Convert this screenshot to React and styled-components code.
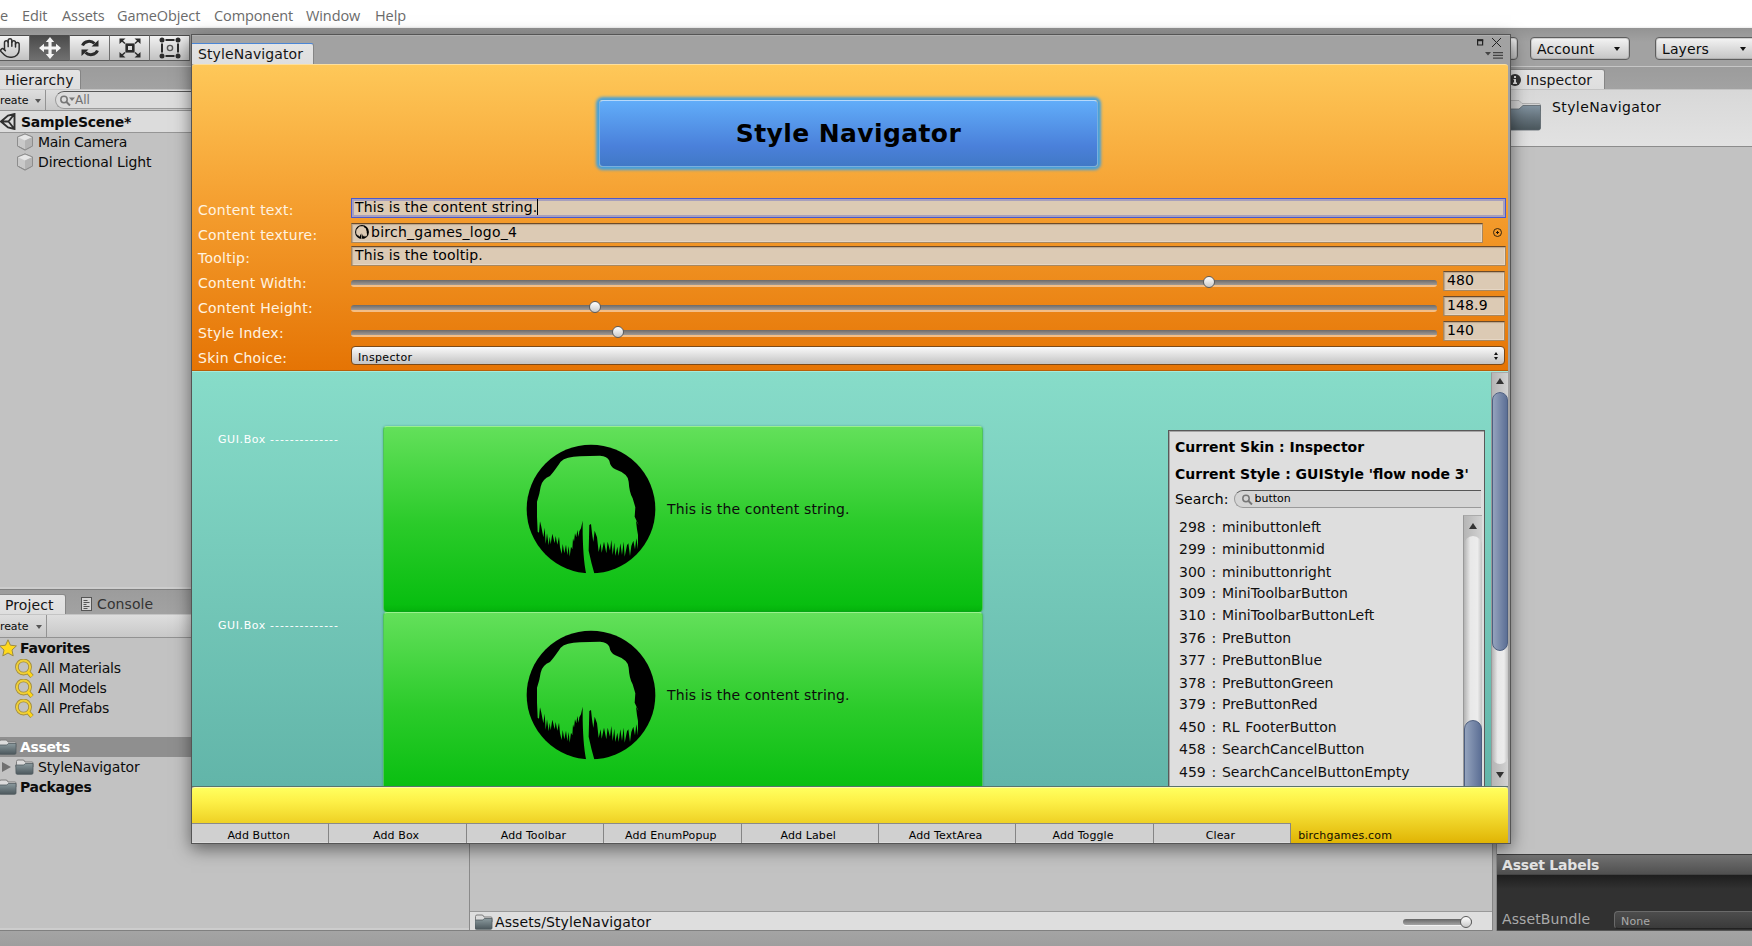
import React from "react";
import styled, { createGlobalStyle, css } from "styled-components";
import { Hand } from "lucide-react";

const Global = createGlobalStyle`
  * { box-sizing: border-box; }
  body { margin: 0; overflow: hidden; background: #a2a2a2; font-family: "DejaVu Sans", Verdana, sans-serif; }
`;

const Screen = styled.div`
  position: relative;
  width: 1752px;
  height: 946px;
  overflow: hidden;
  display: flex;
  flex-direction: column;
  background: #a2a2a2;
  color: #0c0c0c;
  font-size: 14px;
  line-height: 20px;
  letter-spacing: 0.1px;
  white-space: nowrap;
`;

/* ---------- menu and main toolbar ---------- */

const MenuBar = styled.nav`
  display: flex;
  height: 28px;
  flex: none;
  background: linear-gradient(#fff 26px, #ececec);
  font: 14.5px/31px "Open Sans", "Noto Sans", sans-serif;
  letter-spacing: -0.1px;
  color: #6b6b6b;
`;

const MenuItem = styled.span`
  flex: none;
  width: ${(p) => p.$w}px;
`;

const MainToolbar = styled.div`
  display: flex;
  flex: none;
  height: 39px;
  padding-top: 7px;
  justify-content: space-between;
  border-bottom: 1px solid #c6c6c6;
  background: linear-gradient(#939393, #a2a2a2 14px);
`;

const ToolGroup = styled.div`
  display: flex;
  height: 26px;
  margin-left: -10px;
`;

const Tool = styled.div`
  width: 40px;
  height: 26px;
  display: flex;
  align-items: center;
  justify-content: center;
  border-top: 1px solid #4c4c4c;
  border-bottom: 1px solid #5c5c5c;
  border-right: 1px solid #6e6e6e;
  color: #2e2e2e;
  background: ${(p) => (p.$on ? "linear-gradient(#4b4b4b, #707070)" : "linear-gradient(#f2f2f2, #c2c2c2)")};
`;

const TopRight = styled.div`
  display: flex;
  padding-top: 2px;
`;

const DropButton = styled.div`
  display: flex;
  align-items: center;
  justify-content: space-between;
  width: ${(p) => p.$w}px;
  height: 23px;
  margin-left: ${(p) => p.$ml || 0}px;
  margin-right: ${(p) => p.$mr || 0}px;
  padding: 0 9px 0 6px;
  border: 1px solid #5e5e5e;
  border-radius: 4px;
  background: linear-gradient(#f4f4f4, #c4c4c4);
  box-shadow: inset 0 0 0 1px rgba(140, 140, 140, 0.35);
`;

const Triangle = styled.i`
  width: 0;
  height: 0;
  border: ${(p) => p.$s || 3}px solid transparent;
  ${(p) => p.$up
    ? css`border-top: 0; border-bottom: ${p.$h || 4}px solid ${p.$c || "#111"};`
    : css`border-bottom: 0; border-top: ${p.$h || 4}px solid ${p.$c || "#111"};`}
`;

/* ---------- docked panels ---------- */

const Workspace = styled.div`
  display: flex;
  flex: none;
  height: 864px;
`;

const LeftDock = styled.div`
  width: 1493px;
  flex: none;
  display: flex;
  flex-direction: column;
  border-right: 1px solid #868686;
`;

const RightDock = styled.div`
  flex: 1;
  margin-left: 3px;
  display: flex;
  flex-direction: column;
  border-left: 1px solid #868686;
`;

const Panel = styled.section`
  display: flex;
  flex-direction: column;
  height: ${(p) => p.$h}px;
  background: #c2c2c2;
  border-bottom: 1px solid #808080;
  box-shadow: inset 0 -2px #cdcdcd;
`;

const TabBar = styled.div`
  display: flex;
  align-items: flex-end;
  flex: none;
  height: ${(p) => p.$h}px;
  background: linear-gradient(#9c9c9c, #a2a2a2);
  border-bottom: 1px solid #c4c4c4;
`;

const Tab = styled.div`
  display: flex;
  align-items: center;
  height: ${(p) => p.$h || 20}px;
  width: ${(p) => p.$w}px;
  padding-left: ${(p) => p.$pl}px;
  gap: 5px;
  color: ${(p) => (p.$off ? "#333" : "#151515")};
  ${(p) => !p.$off && css`
    background: linear-gradient(#e4e4e4, #dedede);
    border-top: ${p.$blue ? "1.5px solid #4a86d6" : "1px solid #8a8a8a"};
    border-right: 1px solid #858585;
    border-radius: 0 3px 0 0;
  `}
`;

const PanelToolbar = styled.div`
  display: flex;
  align-items: center;
  flex: none;
  height: ${(p) => p.$h}px;
  background: linear-gradient(#dedede, #c8c8c8);
  border-bottom: 1px solid #929292;
`;

const CreateMenu = styled.div`
  display: flex;
  align-items: center;
  justify-content: space-between;
  width: ${(p) => p.$w}px;
  height: 100%;
  padding: 2px 4px 0 0;
  border-right: 1px solid #939393;
  font-size: 11px;
  letter-spacing: -0.1px;
`;

const SearchBox = styled.div`
  display: flex;
  align-items: center;
  flex: 1;
  height: 18px;
  margin-left: ${(p) => p.$ml}px;
  padding-left: ${(p) => p.$pl || 4}px;
  gap: ${(p) => p.$gap || 0}px;
  border: 1px solid #9a9a9a;
  border-top-color: #565656;
  border-right: 0;
  border-radius: 9px 0 0 9px;
  background: ${(p) => p.$bg || "#dcdcdc"};
  color: ${(p) => p.$c || "#707070"};
  font-size: ${(p) => p.$fs || 12}px;
  letter-spacing: 0;
`;

const SceneRow = styled.div`
  display: flex;
  align-items: center;
  height: 22px;
  gap: 4px;
  border-bottom: 1px solid #959595;
  background: #dcdcdc;
  font-weight: bold;
  letter-spacing: -0.25px;
`;

const SceneObjects = styled.div`
  margin-top: -1px;
`;

const TreeRow = styled.div`
  display: flex;
  align-items: center;
  flex: none;
  height: 20px;
  padding-left: ${(p) => p.$pl || 0}px;
  margin-top: ${(p) => p.$mt || 0}px;
  gap: ${(p) => (p.$bold ? 3 : 4)}px;
  font-weight: ${(p) => (p.$bold ? "bold" : "normal")};
  letter-spacing: ${(p) => (p.$bold ? -0.35 : (p.$ls || -0.25))}px;
  color: ${(p) => (p.$on ? "#fff" : "#0c0c0c")};
  background: ${(p) => (p.$on ? "#8f8f8f" : "transparent")};
`;

const ProjectBody = styled.div`
  display: flex;
  flex: 1;
`;

const ProjectTree = styled.div`
  width: 469px;
`;

const ProjectFiles = styled.div`
  flex: 1;
  display: flex;
  flex-direction: column;
  justify-content: flex-end;
  border-left: 1px solid #8a8a8a;
`;

const PathBar = styled.div`
  display: flex;
  align-items: center;
  height: 19px;
  padding: 2px 20px 0 5px;
  gap: 2px;
  border-top: 1px solid #999;
  background: #dedede;
`;

const ZoomSlider = styled.div`
  display: flex;
  align-items: center;
  justify-content: flex-end;
  width: 69px;
  height: 6px;
  margin-left: auto;
  border-radius: 3px;
  background: linear-gradient(#666, #a5a5a5);
  box-shadow: 0 1px #f2f2f2;
`;

const Knob = styled.i`
  flex: none;
  width: 12px;
  height: 12px;
  margin-top: ${(p) => p.$mt || 0}px;
  border: 1.5px solid #5b5b5b;
  border-radius: 50%;
  background: linear-gradient(#fff, #c9c9c9);
`;

const InspectorHead = styled.div`
  display: flex;
  height: 57px;
  gap: 11px;
  padding-top: 7px;
  letter-spacing: 0.4px;
  background: linear-gradient(#d8d8d8, #e2e2e2);
  border-bottom: 1px solid #8c8c8c;
`;

const InspectorBody = styled.div`
  flex: 1;
  background: #c2c2c2;
`;

const AssetHeader = styled.div`
  height: 21px;
  padding-left: 5px;
  border-top: 1px solid #3c3c3c;
  border-bottom: 1px solid #444;
  background: linear-gradient(#717171, #505050);
  color: #e2e2e2;
  font-weight: bold;
  letter-spacing: -0.2px;
`;

const AssetBody = styled.div`
  display: flex;
  align-items: flex-end;
  height: 56px;
  padding: 0 0 1px 5px;
  color: #aaa;
  background: linear-gradient(#1e1e1e, #313131 14px);
  border-bottom: 1px solid #555;
`;

const AssetSelect = styled.div`
  flex: 1;
  height: 18px;
  margin-left: 24px;
  padding-left: 6px;
  border: 1px solid #6a6a6a;
  border-right: 0;
  border-bottom-color: #222;
  border-radius: 4px 0 0 4px;
  background: linear-gradient(#4d4d4d, #3a3a3a);
  font-size: 11px;
`;

const StatusBar = styled.div`
  flex: 1;
  background: linear-gradient(#a4a4a4, #9e9e9e);
`;

/* ---------- floating StyleNavigator window ---------- */

const FloatWindow = styled.div`
  position: absolute;
  left: 191px;
  top: 34px;
  width: 1320px;
  height: 810px;
  display: flex;
  flex-direction: column;
  border: 1px solid #555;
  background: #a2a2a2;
  box-shadow: 0 5px 16px rgba(0, 0, 0, 0.5);
`;

const TitleBar = styled.div`
  display: flex;
  flex: none;
  height: 29px;
  justify-content: space-between;
  align-items: flex-end;
  border-top: 1px solid #b0b0b0;
`;

const WindowContent = styled.div`
  flex: 1;
  display: flex;
  flex-direction: column;
  margin-right: 2px;
`;

const OrangeArea = styled.div`
  height: 307px;
  flex: none;
  padding: 35px 3px 0 6px;
  border-top: 1px solid #fddf9c;
  border-bottom: 1px solid #b95e08;
  border-radius: 3px 3px 0 0;
  background: linear-gradient(#fec859, #f5a031 44%, #e57404);
`;

const Banner = styled.div`
  width: 499px;
  height: 67px;
  margin: 0 0 0 401px;
  border: 1px solid #79b0df;
  border-top-color: #b6d9fb;
  border-radius: 4px;
  background: linear-gradient(#61adf9, #4a80da 70%, #4179c6);
  box-shadow: 0 0 3px 2.5px #45a0dc;
  text-align: center;
  font-size: 25px;
  line-height: 65px;
  font-weight: bold;
  letter-spacing: 0.4px;
  color: #000;
`;

const Form = styled.div`
  margin-top: 31px;
`;

const FormRow = styled.div`
  display: flex;
  height: 20px;
  margin-bottom: ${(p) => p.$mb || 5}px;
`;

const Label = styled.label`
  flex: none;
  width: 153px;
  padding-top: 2px;
  letter-spacing: 0.25px;
  color: #fff3e0;
`;

const Field = styled.div`
  display: flex;
  align-items: center;
  width: ${(p) => p.$w}px;
  flex: none;
  height: 20px;
  padding: 0 0 3px 3px;
  gap: ${(p) => p.$gap || 0}px;
  border: 1px solid ${(p) => (p.$focus ? "#4a59cf" : "#a8875f")};
  border-top-color: ${(p) => (p.$focus ? "#4a59cf" : "#6b4a2a")};
  background: #dccab4;
  box-shadow: ${(p) => (p.$focus ? "inset 0 0 0 2px #a79fbd" : "inset 1px 1px 1px #b9a48b, inset -1px -1px #e5d6c4")};
  color: #000;
  letter-spacing: ${(p) => p.$ls || 0.13}px;
`;

const Caret = styled.i`
  width: 1px;
  height: 16px;
  background: #000;
`;

const Picker = styled.i`
  width: 9px;
  height: 9px;
  margin: 5px 0 0 10px;
  border: 1.5px solid #38260f;
  border-radius: 50%;
  background: radial-gradient(#20140a 1px, transparent 1.4px);
`;

const Track = styled.div`
  display: flex;
  align-items: center;
  width: 1086px;
  height: 7px;
  margin: 9px 6px 0 0;
  border-radius: 3px;
  background: linear-gradient(#6c6a69, #a19a94 5px, #f3be86 5px);
`;

const SkinPopup = styled.div`
  display: flex;
  align-items: center;
  justify-content: space-between;
  width: 1155px;
  height: 19px;
  padding: 4px 6px 0 6px;
  border: 1px solid #7c4a18;
  border-radius: 4px;
  background: linear-gradient(#fafafa, #c3c3c3);
  font-size: 11px;
  letter-spacing: 0.35px;
  color: #000;
`;

const Arrows = styled.span`
  display: flex;
  flex-direction: column;
  gap: 2px;
  margin-top: -4px;
`;

const TealArea = styled.div`
  display: flex;
  flex: none;
  height: 416px;
  overflow: hidden;
  border-top: 1px solid #a5eadb;
  border-bottom: 1px solid #5a746c;
  background: linear-gradient(#87dcc9, #62b5a9);
`;

const BoxList = styled.div`
  width: 976px;
  padding-top: 54px;
`;

const BoxRow = styled.div`
  display: flex;
  height: 186px;
  margin-left: 26px;
`;

const BoxLabel = styled.div`
  width: 165px;
  padding-top: 4px;
  font-size: 11px;
  letter-spacing: 0.6px;
  color: #fff;
`;

const Dashes = styled.span`
  letter-spacing: 0.95px;
`;

const GreenBox = styled.div`
  display: flex;
  align-items: center;
  gap: 11px;
  width: 600px;
  height: 186px;
  padding: 0 0 22px 142px;
  border: 1px solid #4fc35c;
  border-top-color: #9af08f;
  border-bottom: 0;
  border-radius: 4px;
  letter-spacing: 0.14px;
  background: linear-gradient(#63e05a, #2bcb2a 52%, #08be10 96%, #04b10b);
  box-shadow: 0 0 2px rgba(30, 100, 100, 0.5);
`;

const StylePanel = styled.div`
  width: 317px;
  height: 380px;
  margin-top: 58px;
  padding: 6px 2px 0 6px;
  border: 1px solid #595959;
  background: #dedede;
  box-shadow: inset 1px 1px #a5a5a5;
  color: #000;
`;

const PanelHeading = styled.div`
  height: 27px;
  font-weight: bold;
  letter-spacing: 0;
`;

const SearchRow = styled.div`
  display: flex;
  align-items: center;
  height: 18px;
  margin: -1px 1px 0 0;
`;

const StyleListFrame = styled.div`
  display: flex;
  margin-top: 7px;
`;

const StyleList = styled.div`
  width: 288px;
  padding: 2px 0 0 4px;
  color: #101010;
`;

const StyleItem = styled.div`
  height: ${(p) => p.$h}px;
  letter-spacing: 0;
  word-spacing: 1.3px;
`;

const Scrollbar = styled.div`
  flex: none;
  display: flex;
  flex-direction: column;
  align-items: center;
  width: ${(p) => p.$w}px;
  height: ${(p) => p.$h}px;
  margin-left: ${(p) => p.$ml || 0}px;
  border-left: 1px solid #999;
  border-top: 1px solid #aaa;
  background: linear-gradient(90deg, #b5b5b5, #d2d2d2);
`;

const ArrowCap = styled.div`
  display: flex;
  align-items: center;
  justify-content: center;
  flex: none;
  height: ${(p) => p.$h}px;
  padding-bottom: ${(p) => p.$pb || 0}px;
`;

const Trough = styled.div`
  display: flex;
  flex-direction: column;
  flex: 1;
  width: 100%;
  padding-top: ${(p) => p.$pt || 0}px;
  border-radius: 9px;
  background: linear-gradient(90deg, #b3b3b3, #e8e8e8 35%, #ececec 75%, #c4c4c4);
`;

const Thumb = styled.div`
  flex: none;
  height: ${(p) => p.$h}px;
  border: 1.5px solid #4e5f80;
  border-radius: 9px;
  background: linear-gradient(90deg, #94a3bd, #5c6f95);
`;

const YellowArea = styled.div`
  display: flex;
  align-items: flex-end;
  flex: 1;
  border-top: 1px solid #fffcae;
  border-radius: 3px 3px 0 0;
  background: linear-gradient(#ffff5e, #fdf047 25%, #e0b404);
`;

const AddButton = styled.div`
  width: 137.4px;
  height: 20px;
  padding: 2px 3px 0 0;
  border-top: 1px solid #8a8a8a;
  border-right: 1px solid #858585;
  background: linear-gradient(#d0d0d0 18px, #dcdcdc 18px);
  text-align: center;
  font-size: 11px;
  line-height: 19px;
  color: #000;
`;

const SiteLink = styled.span`
  padding: 0 0 0 7px;
  height: 17px;
  font-size: 11px;
  letter-spacing: 0.2px;
  color: #120d00;
`;

const WindowTools = styled.div`
  display: flex;
  flex-direction: column;
  align-items: flex-end;
  padding: 0 7px 5px 0;
  gap: 4px;
`;

/* ---------- drawings ---------- */

const treePath =
  "M259 464 Q247 410 248 302 L243 325 238 334 236 350 232 330 229 352 225 340 222 365 219 355 217 388 213 380 209 410 206 378 202 406 198 374 193 400 188 372 185 402 180 382 177 350 172 374 167 348 164 370 157 341 152 373 149 350 146 376 141 340 137 372 134 323 130 352 124 320 120 304 117 338 113 335 111 290 111 245 Q119 222 122 200 Q127 177 150 168 Q163 153 182 125 Q198 110 240 109 L300 107 Q322 108 328 122 Q331 141 346 148 Q385 162 386 185 Q388 218 398 235 L406 262 404 290 416 316 408 302 411 328 414 345 414 388 409 355 405 388 400 362 394 378 390 408 385 370 381 376 374 410 371 365 366 405 361 370 356 408 352 380 346 408 343 368 338 405 334 360 330 392 323 365 319 400 312 365 305 398 302 370 296 396 291 352 284 332 280 366 276 340 273 312 268 315 266 392 Q274 430 284 464 Z";

function TreeLogo({ size = 130, id }) {
  return (
    <svg width={size} height={size} viewBox="78 72 390 390">
      <mask id={id}>
        <rect x="78" y="72" width="390" height="390" fill="#fff" />
        <path d={treePath} fill="#000" />
      </mask>
      <circle cx="273" cy="267" r="193" fill="#000" mask={`url(#${id})`} />
    </svg>
  );
}

const MoveIcon = () => (
  <svg width="22" height="22" viewBox="0 0 22 22" fill="#f4f4f4">
    <path d="M11 0l4.200 5H12.600v4.400H17V6.800L22 11l-5 4.200v-2.600h-4.400V17h2.600L11 22l-4.200-5h2.600v-4.400H5v2.600L0 11l5-4.200v2.600h4.400V5H6.800z" />
  </svg>
);

const RotateIcon = () => (
  <svg width="20" height="18" viewBox="0 0 20 18" fill="none" stroke="#2b2b2b" strokeWidth="3">
    <path d="M2.500 6.500C4.500 1.800 11 1 14.500 4.500M17.500 11.500C15.500 16.200 9 17 5.500 13.500" />
    <path d="M18.500 1v6.500h-7zM1.500 17v-6.500h7z" fill="#2b2b2b" stroke="none" />
  </svg>
);

const ScaleIcon = () => (
  <svg width="22" height="20" viewBox="0 0 22 20" fill="none" stroke="#2b2b2b" strokeWidth="2">
    <rect x="7.700" y="6.700" width="6.600" height="6.600" strokeWidth="2.600" />
    <path d="M1.500 1.500l4.500 4M20.500 1.500l-4.500 4M1.500 18.500l4.500-4M20.500 18.500l-4.500-4" strokeWidth="1.500" />
    <path d="M.5 6V.5h6zM21.500 6V.5h-6zM.5 14v5.500h6zM21.500 14v5.500h-6z" fill="#2b2b2b" stroke="none" />
  </svg>
);

const RectIcon = () => (
  <svg width="22" height="22" viewBox="0 0 22 22" fill="none" stroke="#2b2b2b">
    <path d="M6.500 3h9M6.500 19h9M3 6.500v9M19 6.500v9" strokeWidth="2" />
    <circle cx="11" cy="11" r="2.600" strokeWidth="1.400" stroke="#555" />
    <g fill="#2b2b2b" stroke="none">
      <circle cx="3" cy="3" r="2.500" /><circle cx="19" cy="3" r="2.500" />
      <circle cx="3" cy="19" r="2.500" /><circle cx="19" cy="19" r="2.500" />
    </g>
  </svg>
);

const UnityIcon = () => (
  <svg width="17" height="17" viewBox="0 0 17 17" fill="none" stroke="#303030" strokeWidth="1.900">
    <path d="M1 8.500L8 2.500l6.500-1.500v15L8 14.500zM1 8.500h7.500M8.500 8.500L14 1.500M8.500 8.500L14 15.500" />
  </svg>
);

const CubeIcon = () => (
  <svg width="18" height="18" viewBox="0 0 18 18" stroke="#8d8d8d" strokeWidth="1">
    <path d="M9 1l7.500 3v9L9 17l-7.500-4V4z" fill="#c9c9c9" />
    <path d="M9 1l7.500 3L9 7.500 1.500 4z" fill="#e6e6e6" stroke="none" />
    <path d="M9 7.500L16.500 4v9L9 17z" fill="#b4b4b4" stroke="none" />
    <path d="M9 1l7.500 3v9L9 17l-7.500-4V4z" fill="none" />
  </svg>
);

const StarIcon = () => (
  <svg width="17" height="18" viewBox="0 0 17 18">
    <path d="M8 .8l2.400 5.400 6 .7-4.400 4.100 1.200 5.900L8 14l-5.200 2.900L4 11-.5 6.900l6-.7z" fill="#ffd91c" stroke="#9a8a45" />
  </svg>
);

const GoldSearchIcon = () => (
  <svg width="19" height="19" viewBox="0 0 19 19" fill="none">
    <circle cx="8.500" cy="8" r="6.600" stroke="#a08b3a" strokeWidth="3.600" />
    <path d="M12.800 12.800l4.200 4.700" stroke="#a08b3a" strokeWidth="4.500" />
    <circle cx="8.500" cy="8" r="6.600" stroke="#f0d038" strokeWidth="2" />
    <path d="M12.800 12.800l4 4.500" stroke="#ffd71a" strokeWidth="2.800" />
  </svg>
);

const FolderIcon = ({ w = 19, h = 16, id }) => (
  <svg width={w} height={h} viewBox={`${19 - w} 0 ${w} 16`}>
    <defs>
      <linearGradient id={id} x1="0" y1="0" x2="0" y2="1">
        <stop offset="0" stopColor="#8b9a9e" /><stop offset="1" stopColor="#4c585d" />
      </linearGradient>
    </defs>
    <path d="M1.500 4V2.500Q1.500 1 3 1h5q1.500 0 2 2h7q1 0 1 1v4h-17z" fill="#dcdcdc" stroke="#7d7d7d" />
    <path d="M.8 6h8l1.500-1.500H18V14q0 1.300-1.300 1.300H2.200Q1 15.300 1 14z" fill={`url(#${id})`} stroke="#515c60" strokeWidth=".8" />
  </svg>
);

const BigFolderIcon = () => (
  <svg width="44" height="40" viewBox="0 0 44 40">
    <defs>
      <linearGradient id="bigFolder" x1="0" y1="0" x2="0" y2="1">
        <stop offset="0" stopColor="#8293a0" /><stop offset=".5" stopColor="#64727b" /><stop offset="1" stopColor="#4a565c" />
      </linearGradient>
    </defs>
    <path d="M0 4.500Q0 3.500 1 3.500h21l3 3h17q1.500 0 1.500 1.500v6H0z" fill="#d2d2d2" stroke="#a5a5a5" strokeWidth=".8" />
    <path d="M0 12h22l4-3.500h17.500V31q0 2-2 2H2q-2 0-2-2z" fill="url(#bigFolder)" stroke="#596369" strokeWidth=".8" />
  </svg>
);

const ConsoleIcon = () => (
  <svg width="11" height="14" viewBox="0 0 11 14" fill="none" stroke="#555">
    <rect x=".5" y=".5" width="10" height="13" fill="#d4d4d4" />
    <path d="M2.500 3.500h4M2.500 5.500h6M2.500 7.500h3M2.500 9.500h6M2.500 11.500h4" />
  </svg>
);

const SearchIcon = ({ drop }) => (
  <svg width={drop ? 15 : 11} height="11" viewBox={drop ? "0 0 15 11" : "0 0 11 11"} fill="none" stroke="#777">
    <circle cx="4" cy="4.500" r="3.200" strokeWidth="1.500" />
    <path d="M6.500 7l3.500 3.500" strokeWidth="2" />
    {drop && <path d="M9 2.500h6l-3 3.500z" fill="#777" stroke="none" />}
  </svg>
);

const InfoIcon = () => (
  <svg width="12" height="12" viewBox="0 0 12 12">
    <circle cx="6" cy="6" r="6" fill="#333" />
    <path d="M5 2h2v2H5zM4.500 5H7v3.500h1V10H4V8.500h1V6h-.5z" fill="#e8e8e8" />
  </svg>
);

const FrameIcons = () => (
  <svg width="26" height="9" viewBox="0 0 26 9" fill="none" stroke="#222">
    <path d="M.6 2v5h5V2z" strokeWidth="1.200" /><path d="M0 2.200h6.200" strokeWidth="2" />
    <path d="M15 0l9 9M24 0l-9 9" />
  </svg>
);

const PaneMenuIcon = () => (
  <svg width="18" height="8" viewBox="0 0 18 8" fill="#444">
    <path d="M0 1h6L3 4.500z" /><path d="M8 1h10v1.200H8zM8 3.800h10V5H8zM8 6.600h10v1.200H8z" />
  </svg>
);

/* ---------- data ---------- */

const menu = [["e", 22], ["Edit", 40], ["Assets", 55], ["GameObject", 97], ["Component", 92], ["Window", 69], ["Help", 50]];

const sliders = [
  { label: "Content Width:", value: "480", pos: 852 },
  { label: "Content Height:", value: "148.9", pos: 238 },
  { label: "Style Index:", value: "140", pos: 261 },
];

const styleItems = [
  ["298 : minibuttonleft", 22], ["299 : minibuttonmid", 23], ["300 : minibuttonright", 21],
  ["309 : MiniToolbarButton", 22], ["310 : MiniToolbarButtonLeft", 23], ["376 : PreButton", 22],
  ["377 : PreButtonBlue", 23], ["378 : PreButtonGreen", 21], ["379 : PreButtonRed", 23],
  ["450 : RL FooterButton", 22], ["458 : SearchCancelButton", 23], ["459 : SearchCancelButtonEmpty", 22],
];

const addButtons = ["Add Button", "Add Box", "Add Toolbar", "Add EnumPopup", "Add Label", "Add TextArea", "Add Toggle", "Clear"];

const contentText = "This is the content string.";

/* ---------- sections ---------- */

function Hierarchy() {
  return (
    <Panel $h={523}>
      <TabBar $h={23}><Tab $w={81} $pl={5}>Hierarchy</Tab></TabBar>
      <PanelToolbar $h={21}>
        <CreateMenu $w={46}>reate<Triangle $c="#555" /></CreateMenu>
        <SearchBox $ml={9}><SearchIcon drop />All</SearchBox>
      </PanelToolbar>
      <SceneRow><UnityIcon />SampleScene*</SceneRow>
      <SceneObjects>
        <TreeRow $pl={16} $ls={-0.35}><CubeIcon />Main Camera</TreeRow>
        <TreeRow $pl={16} $ls={-0.1}><CubeIcon />Directional Light</TreeRow>
      </SceneObjects>
    </Panel>
  );
}

function Project() {
  return (
    <Panel $h={341}>
      <TabBar $h={25}>
        <Tab $w={66} $pl={5}>Project</Tab>
        <Tab $off $w={120} $pl={15}><ConsoleIcon />Console</Tab>
      </TabBar>
      <PanelToolbar $h={23}>
        <CreateMenu $w={47}>reate<Triangle $c="#555" /></CreateMenu>
      </PanelToolbar>
      <ProjectBody>
        <ProjectTree>
          <TreeRow $bold><StarIcon />Favorites</TreeRow>
          {["All Materials", "All Models", "All Prefabs"].map((t) => (
            <TreeRow key={t} $pl={15}><GoldSearchIcon />{t}</TreeRow>
          ))}
          <TreeRow $bold $on $mt={19}><FolderIcon w={17} id="f1" />Assets</TreeRow>
          <TreeRow $pl={2} $ls={-0.15}>
            <svg width="9" height="10"><path d="M0 0l9 5-9 5z" fill="#707070" /></svg>
            <FolderIcon id="f2" />StyleNavigator
          </TreeRow>
          <TreeRow $bold><FolderIcon w={17} id="f3" />Packages</TreeRow>
        </ProjectTree>
        <ProjectFiles>
          <PathBar>
            <FolderIcon w={18} id="f4" />Assets/StyleNavigator
            <ZoomSlider><Knob /></ZoomSlider>
          </PathBar>
        </ProjectFiles>
      </ProjectBody>
    </Panel>
  );
}

function Inspector() {
  return (
    <RightDock>
      <TabBar $h={23}><Tab $w={108} $pl={12}><InfoIcon />Inspector</Tab></TabBar>
      <InspectorHead>
        <BigFolderIcon />StyleNavigator
      </InspectorHead>
      <InspectorBody />
      <AssetHeader>Asset Labels</AssetHeader>
      <AssetBody>AssetBundle<AssetSelect>None</AssetSelect></AssetBody>
    </RightDock>
  );
}

function Settings() {
  return (
    <OrangeArea>
      <Banner>Style Navigator</Banner>
      <Form>
        <FormRow><Label>Content text:</Label><Field $focus $w={1155}>{contentText}<Caret /></Field></FormRow>
        <FormRow $mb={3}>
          <Label>Content texture:</Label>
          <Field $w={1132} $gap={2} $ls={0.25}><TreeLogo size={14} id="treeSmall" />birch_games_logo_4</Field>
          <Picker />
        </FormRow>
        <FormRow><Label>Tooltip:</Label><Field $w={1155}>This is the tooltip.</Field></FormRow>
        {sliders.map((s) => (
          <FormRow key={s.label}>
            <Label>{s.label}</Label>
            <Track><Knob $mt={-3} style={{ marginLeft: s.pos }} /></Track>
            <Field $w={62}>{s.value}</Field>
          </FormRow>
        ))}
        <FormRow>
          <Label>Skin Choice:</Label>
          <SkinPopup>Inspector<Arrows><Triangle $up $s={2} $h={3} /><Triangle $s={2} $h={3} /></Arrows></SkinPopup>
        </FormRow>
      </Form>
    </OrangeArea>
  );
}

function Preview() {
  return (
    <TealArea>
      <BoxList>
        {["treeA", "treeB"].map((id) => (
          <BoxRow key={id}>
            <BoxLabel>GUI.Box <Dashes>--------------</Dashes></BoxLabel>
            <GreenBox><TreeLogo id={id} />{contentText}</GreenBox>
          </BoxRow>
        ))}
      </BoxList>
      <StylePanel>
        <PanelHeading>Current Skin : Inspector</PanelHeading>
        <PanelHeading>Current Style : GUIStyle 'flow node 3'</PanelHeading>
        <SearchRow>Search:<SearchBox $ml={5} $pl={7} $gap={2} $bg="#d5d5d5" $c="#000" $fs={11}><SearchIcon />button</SearchBox></SearchRow>
        <StyleListFrame>
          <StyleList>{styleItems.map(([t, h]) => <StyleItem key={t} $h={h}>{t}</StyleItem>)}</StyleList>
          <Scrollbar $w={19} $h={320}>
            <ArrowCap $h={20}><Triangle $up $s={4} $h={6} $c="#333" /></ArrowCap>
            <Trough $pt={184}><Thumb $h={100} /></Trough>
          </Scrollbar>
        </StyleListFrame>
      </StylePanel>
      <Scrollbar $w={17} $h={415} $ml={6}>
        <ArrowCap $h={19} $pb={3}><Triangle $up $s={4} $h={6} $c="#333" /></ArrowCap>
        <Trough><Thumb $h={259} /></Trough>
        <ArrowCap $h={23} $pb={2}><Triangle $s={4} $h={6} $c="#333" /></ArrowCap>
      </Scrollbar>
    </TealArea>
  );
}

export default function App() {
  return (
    <Screen>
      <Global />
      <MenuBar>
        {menu.map(([t, w]) => <MenuItem key={t} $w={w}>{t}</MenuItem>)}
      </MenuBar>
      <MainToolbar>
        <ToolGroup>
          <Tool><Hand size={22} strokeWidth={1.6} /></Tool>
          <Tool $on><MoveIcon /></Tool>
          <Tool><RotateIcon /></Tool>
          <Tool><ScaleIcon /></Tool>
          <Tool><RectIcon /></Tool>
        </ToolGroup>
        <TopRight>
          <DropButton $w={40} />
          <DropButton $w={100} $ml={12}>Account<Triangle /></DropButton>
          <DropButton $w={101} $ml={25} $mr={-4}>Layers<Triangle /></DropButton>
        </TopRight>
      </MainToolbar>
      <Workspace>
        <LeftDock><Hierarchy /><Project /></LeftDock>
        <Inspector />
      </Workspace>
      <StatusBar />
      <FloatWindow>
        <TitleBar>
          <Tab $blue $h={21} $w={122} $pl={6}>StyleNavigator</Tab>
          <WindowTools><FrameIcons /><PaneMenuIcon /></WindowTools>
        </TitleBar>
        <WindowContent>
          <Settings />
          <Preview />
          <YellowArea>
            {addButtons.map((t) => <AddButton key={t}>{t}</AddButton>)}
            <SiteLink>birchgames.com</SiteLink>
          </YellowArea>
        </WindowContent>
      </FloatWindow>
    </Screen>
  );
}
